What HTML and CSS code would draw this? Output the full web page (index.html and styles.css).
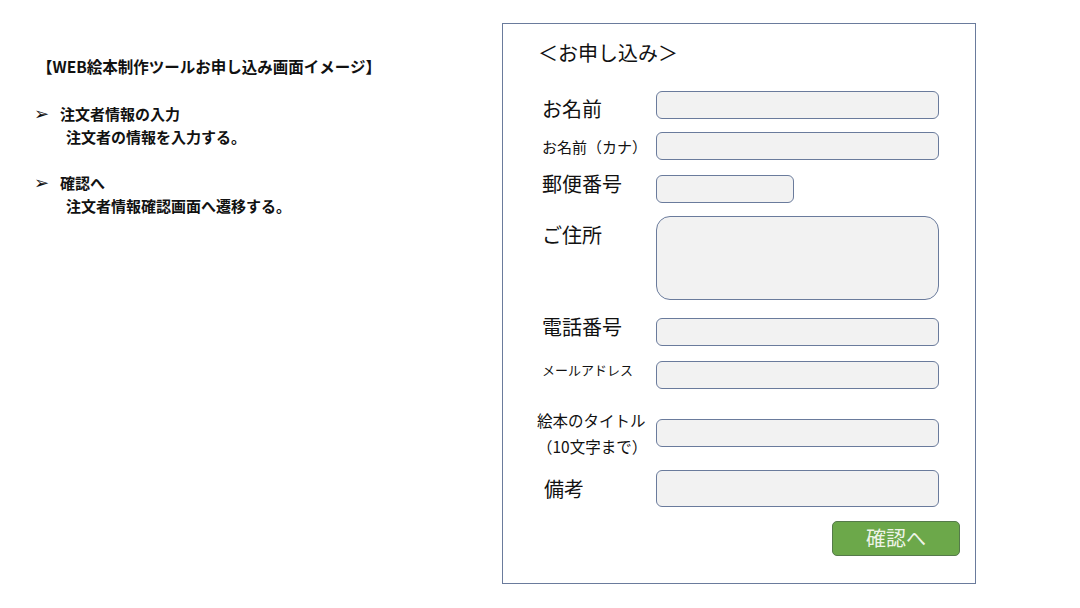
FILE: index.html
```html
<!DOCTYPE html>
<html lang="ja">
<head>
    <meta charset="UTF-8">
    <meta name="viewport" content="width=device-width, initial-scale=1.0">
    <title>WEB絵本制作ツール お申し込み画面イメージ</title>
    <link rel="stylesheet" href="styles.css">
</head>
<body>
    <div class="notes">
        <h2 class="notes-title">【WEB絵本制作ツールお申し込み画面イメージ】</h2>
        <div class="note">
            <div class="note-head"><span class="arrow">➢</span>注文者情報の入力</div>
            <div class="note-body">注文者の情報を入力する。</div>
        </div>
        <div class="note">
            <div class="note-head"><span class="arrow">➢</span>確認へ</div>
            <div class="note-body">注文者情報確認画面へ遷移する。</div>
        </div>
    </div>

    <form class="frame" id="orderForm">
        <div class="frame-title">＜お申し込み＞</div>

        <div class="row row-name">
            <label class="big down" for="name">お名前</label>
            <input class="field" type="text" id="name" name="name">
        </div>
        <div class="row row-kana">
            <label class="small" for="kana">お名前（カナ）</label>
            <input class="field" type="text" id="kana" name="kana">
        </div>
        <div class="row row-zip">
            <label class="big up" for="zip">郵便番号</label>
            <input class="field short" type="text" id="zip" name="zip">
        </div>
        <div class="row row-address">
            <label class="big top" for="address">ご住所</label>
            <textarea class="field area" id="address" name="address"></textarea>
        </div>
        <div class="row row-tel">
            <label class="big up" for="tel">電話番号</label>
            <input class="field" type="text" id="tel" name="tel">
        </div>
        <div class="row row-mail">
            <label class="tiny up" for="mail">メールアドレス</label>
            <input class="field" type="text" id="mail" name="mail">
        </div>
        <div class="row row-book">
            <label class="mid" for="book">絵本のタイトル<br>（10文字まで）</label>
            <input class="field" type="text" id="book" name="book">
        </div>
        <div class="row row-memo">
            <label class="big indent" for="memo">備考</label>
            <input class="field tall" type="text" id="memo" name="memo">
        </div>
        <div class="actions">
            <button class="confirm" type="submit">確認へ</button>
        </div>
    </form>
</body>
</html>
```

FILE: styles.css
```css
body {
    margin: 0;
    width: 1080px;
    height: 608px;
    background: #fff;
    color: #111;
    font-family: "Noto Sans CJK JP", "Noto Sans", sans-serif;
    display: flex;
    align-items: flex-start;
}
.notes {
    width: 502px;
    padding: 53px 0 0 34px;
    box-sizing: border-box;
    font-weight: bold;
    font-size: 15px;
}
.notes-title {
    margin: 0 0 23px 3px;
    font-size: 15.5px;
    line-height: 26px;
}
.note {
    margin-bottom: 23px;
}
.note-head {
    line-height: 24px;
}
.arrow {
    display: inline-block;
    width: 26px;
    font-weight: normal;
    font-family: "DejaVu Sans", sans-serif;
    font-size: 18px;
    line-height: 20px;
}
.note-body {
    padding-left: 32px;
    line-height: 22px;
}
.frame {
    margin-top: 23px;
    width: 474px;
    height: 561px;
    box-sizing: border-box;
    border: 1.5px solid #6a7b9c;
    padding: 16px 36px 0 37px;
}
.frame-title {
    font-size: 20px;
    line-height: 26px;
    margin-left: -2px;
}
.row {
    display: flex;
    align-items: center;
}
.row label {
    width: 116px;
    flex: none;
    padding-left: 2px;
    box-sizing: border-box;
}
.big {
    font-size: 20px;
}
.small {
    font-size: 15px;
}
.tiny {
    font-size: 13px;
}
.mid {
    font-size: 15.5px;
    line-height: 26px;
    margin-left: -5px;
    margin-right: 5px;
}
.up {
    margin-top: -12px;
}
.down {
    margin-top: 4px;
    margin-bottom: -4px;
}
.top {
    align-self: flex-start;
    margin-top: 4px;
}
.indent {
    padding-left: 4px !important;
}
.field {
    display: block;
    width: 283px;
    height: 28px;
    box-sizing: border-box;
    margin: 0;
    background: #f2f2f2;
    border: 1.5px solid #6a7b9c;
    border-radius: 6px;
    font: inherit;
    resize: none;
}
.short {
    width: 138px;
    height: 28px;
}
.area {
    height: 84px;
    border-radius: 14px;
}
.tall {
    height: 37px;
}
.row-name { margin-top: 24px; }
.row-kana { margin-top: 13px; }
.row-zip { margin-top: 15px; }
.row-address { margin-top: 13px; }
.row-tel { margin-top: 18px; }
.row-mail { margin-top: 15px; }
.row-book { margin-top: 18px; }
.row-memo { margin-top: 11px; }
.actions {
    display: flex;
    justify-content: flex-end;
    margin: 14px -21px 0 0;
}
.confirm {
    width: 128px;
    height: 35px;
    background: #6ca84a;
    border: 1.5px solid #557a4a;
    border-radius: 5px;
    color: #eef4e8;
    font-family: inherit;
    font-size: 20px;
    padding: 0 0 2px 0;
    cursor: pointer;
}
.confirm:hover {
    background: #62a040;
}
```
